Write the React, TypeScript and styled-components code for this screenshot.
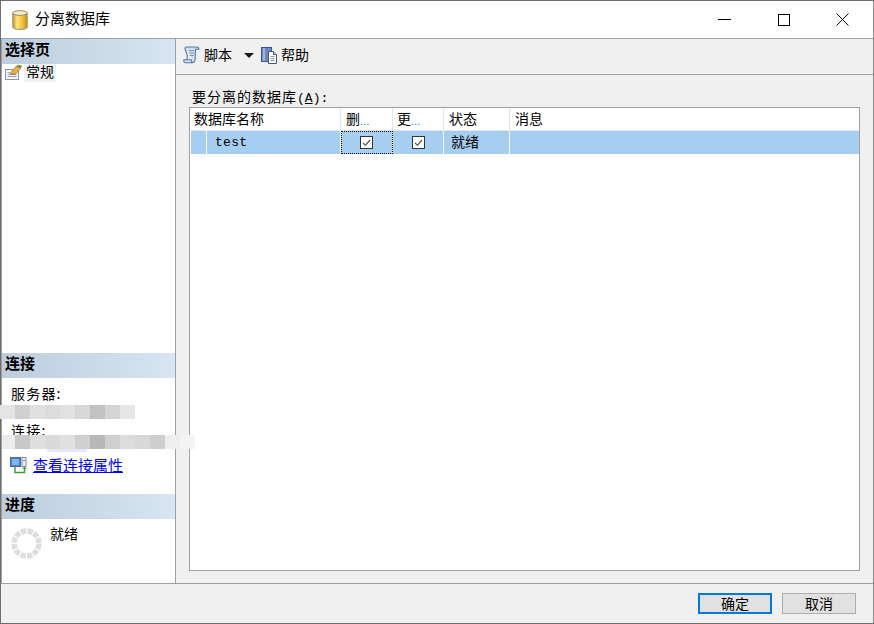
import React from 'react';
import styled, { createGlobalStyle } from 'styled-components';

const GlobalStyle = createGlobalStyle`
  html, body {
    margin: 0;
    padding: 0;
    background: #f0f0f0;
  }
  body {
    font-family: "Noto Sans CJK SC", "Liberation Sans", sans-serif;
    font-size: 14px;
    color: #000;
  }
`;

const Window = styled.div`
  box-sizing: border-box;
  width: 874px;
  height: 624px;
  display: flex;
  flex-direction: column;
  border: 1px solid #6e6e6e;
  border-right-color: #8a8a8a;
  background: #f0f0f0;
`;

const TitleBar = styled.div`
  flex: 0 0 37px;
  display: flex;
  align-items: center;
  background: #fff;
  border-bottom: 1px solid #a0a0a0;
  padding: 0 1px 0 11px;
`;

const TitleText = styled.span`
  margin-left: 7px;
  padding-bottom: 3px;
  font-size: 15px;
  line-height: 34px;
  flex: 1;
`;

const WinButton = styled.div`
  width: 59px;
  height: 37px;
  display: flex;
  align-items: center;
  justify-content: center;
`;

const Body = styled.div`
  flex: 1;
  display: flex;
  min-height: 0;
`;

const Sidebar = styled.div`
  flex: 0 0 175px;
  width: 175px;
  min-width: 0;
  box-sizing: border-box;
  display: flex;
  flex-direction: column;
  background: #fff;
  border-left: 1px solid #a0a0a0;
  border-right: 1px solid #a0a0a0;
`;

const SectionHeader = styled.div`
  flex: 0 0 25px;
  height: 25px;
  background: linear-gradient(to right, #bdcddc, #d8e5f2);
  font-weight: 700;
  font-size: 15px;
  line-height: 20px;
  padding-left: 3px;
`;

const PagesSection = styled.div`
  flex: 1;
`;

const PageItem = styled.div`
  display: flex;
  align-items: center;
  height: 18px;
  padding-left: 3px;
`;

const PageLabel = styled.span`
  margin-left: 2px;
  padding: 0 2px 3px;
  background: #f0f0f0;
  line-height: 15px;
  font-size: 14px;
`;

const ConnectSection = styled.div`
  flex: 0 0 141px;
`;

const ConnectBody = styled.div`
  padding: 6px 0 0 9px;
  height: 116px;
  box-sizing: border-box;
`;

const InfoLabel = styled.div`
  font-size: 14px;
  line-height: 18px;
  letter-spacing: 1.2px;
`;

const Mosaic = styled.div<{ $mt: number; $ml: number; $mb: number }>`
  display: flex;
  height: 14px;
  width: 195px;
  margin: ${p => p.$mt}px 0 ${p => p.$mb}px ${p => p.$ml}px;
  position: relative;
  z-index: 2;
`;

const MosaicCell = styled.div<{ $w: number; $shade: string }>`
  flex: 0 0 ${p => p.$w}px;
  background: ${p => p.$shade};
`;

const MosaicResidue = styled.div`
  width: 40px;
  height: 3px;
  margin-left: 36px;
  background: #e6e6fb;
`;

const LinkRow = styled.div`
  display: flex;
  align-items: center;
  height: 18px;
  margin: 4px 0 0 -1px;
`;

const ConnectLink = styled.a`
  margin-left: 6px;
  color: #0000ee;
  text-decoration: underline;
  font-size: 15px;
  line-height: 18px;
  cursor: pointer;
`;

const ProgressSection = styled.div`
  flex: 0 0 89px;
`;

const ProgressBody = styled.div`
  display: flex;
  align-items: flex-start;
  padding: 6px 0 0 9px;
`;

const SpinnerSlot = styled.div`
  margin-top: 3px;
  height: 31px;
`;

const ProgressText = styled.span`
  margin-left: 8px;
  font-size: 14px;
  line-height: 16px;
`;

const Main = styled.div`
  flex: 1;
  display: flex;
  flex-direction: column;
  min-width: 0;
`;

const Toolbar = styled.div`
  box-sizing: border-box;
  flex: 0 0 36px;
  display: flex;
  align-items: center;
  padding: 0 0 3px 7px;
  border-bottom: 1px solid #a0a0a0;
  background: #f0f0f0;
`;

const ToolLabel = styled.span`
  margin-left: 4px;
  padding-bottom: 3px;
  font-size: 14px;
  line-height: 16px;
`;

const Caret = styled.span`
  width: 0;
  height: 0;
  margin: 0 7px 0 12px;
  border-left: 5px solid transparent;
  border-right: 5px solid transparent;
  border-top: 5px solid #1a1a1a;
`;

const Content = styled.div`
  flex: 1;
  display: flex;
  flex-direction: column;
  padding: 13px;
  padding-bottom: 12px;
  min-height: 0;
`;

const GridLabel = styled.div`
  margin-left: 3px;
  height: 19px;
  font-size: 14px;
  line-height: 17px;
  letter-spacing: 1px;
`;

const GridAccess = styled.span`
  font-family: "Liberation Mono", monospace;
  font-size: 13px;
  letter-spacing: 0;
`;

const GridUnderline = styled.span`
  text-decoration: underline;
`;

const Grid = styled.div`
  flex: 1;
  background: #fff;
  border: 1px solid #a0a0a0;
  padding: 0 0 0 1px;
`;

const Row = styled.div<{ $selected?: boolean }>`
  display: flex;
  height: ${p => (p.$selected ? 23 : 22)}px;
  background: ${p => (p.$selected ? '#a5cef0' : '#fff')};
  border-bottom: ${p => (p.$selected ? 'none' : '1px solid #e4e4e4')};
`;

const Cell = styled.div<{ $w?: number; $center?: boolean; $pad?: number }>`
  box-sizing: border-box;
  ${p => (p.$w ? `flex: 0 0 ${p.$w}px;` : 'flex: 1;')}
  display: flex;
  align-items: center;
  justify-content: ${p => (p.$center ? 'center' : 'flex-start')};
  padding-left: ${p => p.$pad ?? 0}px;
  white-space: nowrap;
  font-size: 14px;
`;

const HeaderCell = styled(Cell)<{ $last?: boolean }>`
  padding-bottom: 2px;
  border-right: ${p => (p.$last ? 'none' : '1px solid #e4e4e4')};
`;

const DataCell = styled(Cell)<{ $focus?: boolean }>`
  border-right: 1px solid #fff;
  ${p => (p.$focus ? 'outline: 1px dotted #000; outline-offset: -1px;' : '')}
`;

const StatusText = styled.span`
  padding-bottom: 3px;
`;

const Ellipsis = styled.span`
  color: #0a6fc2;
  font-size: 10px;
  align-self: flex-end;
  line-height: 14px;
  letter-spacing: 0.5px;
`;

const MonoText = styled.span`
  font-family: "Liberation Mono", monospace;
  font-size: 13px;
  letter-spacing: 0.3px;
`;

const CheckBox = styled.span`
  box-sizing: border-box;
  width: 13px;
  height: 13px;
  display: flex;
  align-items: center;
  justify-content: center;
  background: #fff;
  border: 1px solid #333;
`;

const Footer = styled.div`
  box-sizing: border-box;
  flex: 0 0 40px;
  display: flex;
  align-items: flex-start;
  justify-content: flex-end;
  gap: 10px;
  padding: 9px 17px 0 0;
  border-top: 1px solid #a0a0a0;
`;

const DialogButton = styled.button<{ $primary?: boolean }>`
  box-sizing: border-box;
  width: 74px;
  height: 21px;
  padding: 0;
  background: #e1e1e1;
  border: ${p => (p.$primary ? '2px solid #0078d7' : '1px solid #adadad')};
  font-family: inherit;
  font-size: 14px;
  line-height: 17px;
  color: #000;
`;

const CylinderIcon = () => (
  <svg width="16" height="20" viewBox="0 0 16 20">
    <defs>
      <linearGradient id="cyl" x1="0" x2="1" y1="0" y2="0">
        <stop offset="0" stopColor="#c39a2c" />
        <stop offset="0.3" stopColor="#fde582" />
        <stop offset="0.7" stopColor="#f2bd30" />
        <stop offset="1" stopColor="#c2901c" />
      </linearGradient>
    </defs>
    <path d="M.8 3v14c0 1.5 3.2 2.5 7.2 2.5s7.2-1 7.2-2.5V3z" fill="url(#cyl)" stroke="#8a8468" strokeWidth="0.9" />
    <ellipse cx="8" cy="3" rx="7.2" ry="2.4" fill="#f5ecc4" stroke="#8a8468" strokeWidth="0.9" />
  </svg>
);

const ScrollIcon = () => (
  <svg width="17" height="18" viewBox="0 0 17 18">
    <path d="M3.5 1h10c1.4 0 2.4.9 2.4 2.2h-3.4l-.4 9.8c-.1 2.3-1 3.8-2.8 3.8H2.6C1.2 16.8.6 15.5.9 13.8h7.3c0 1.3.4 2.2 1.3 2.4" fill="#d3dfef" stroke="#56779f" strokeWidth="1.1" />
    <path d="M3.5 1C2.2 1 1.7 2.1 2.1 3.4l1.7 4.3c.5 1.7.6 3.7.3 6.1" fill="#bccde3" stroke="#56779f" strokeWidth="1.1" />
    <path d="M5.8 4.5h5M6.4 7h4.6M6.7 9.5h4.2" stroke="#7a93b4" strokeWidth="1" />
  </svg>
);

const HelpIcon = () => (
  <svg width="16" height="17" viewBox="0 0 16 17">
    <rect x="0.5" y="0.5" width="10" height="14" fill="#6f86bd" stroke="#3c5592" />
    <rect x="2" y="1" width="2" height="13" fill="#a3b3da" />
    <path d="M7.5 4.5h5l3 3v9h-8z" fill="#fff" stroke="#47557a" />
    <path d="M12.5 4.5v3h3" fill="#dfe5f2" stroke="#47557a" />
    <path d="M9.5 9.5h4M9.5 11.5h4M9.5 13.5h4" stroke="#8a96b4" />
  </svg>
);

const PageIcon = () => (
  <svg width="17" height="16" viewBox="0 0 17 16">
    <rect x="0.5" y="4.5" width="13" height="10" fill="#f4f6fa" stroke="#8b93a0" />
    <path d="M2.5 7.5h2M2.5 9.5h9M2.5 11.5h9" stroke="#8fa0bb" />
    <path d="M5 8.5L11 1.5l5 1.5-6 6.5z" fill="#eeb044" stroke="#94701f" strokeWidth="0.7" />
    <path d="M11 1.5l5 1.5 1-2.5L13 0z" fill="#7f8c2e" />
  </svg>
);

const ConnectionIcon = () => (
  <svg width="17" height="17" viewBox="0 0 17 17">
    <rect x="0.5" y="0.5" width="10" height="9" fill="#3f7fe0" stroke="#5a6a8a" />
    <rect x="2" y="2" width="7" height="6" fill="#7fb6f5" />
    <rect x="12" y="0.5" width="4" height="9" fill="#eef0f4" stroke="#7c879e" />
    <path d="M13 3.5h2" stroke="#7c879e" />
    <path d="M5 10v5.5h9.500v-4" fill="none" stroke="#3f9a2e" strokeWidth="1.4" />
    <path d="M12.3 12l2.200-2.500 2.200 2.500z" fill="#3f9a2e" />
  </svg>
);

const Spinner = () => (
  <svg width="31" height="31" viewBox="0 0 31 31">
    <circle
      cx="15.5"
      cy="15.5"
      r="12.5"
      fill="none"
      stroke="#dedede"
      strokeWidth="5.5"
      strokeDasharray="5.3 1.245"
      strokeDashoffset="-0.62"
    />
  </svg>
);

const CheckMark = () => (
  <svg width="9" height="9" viewBox="0 0 9 9">
    <path d="M1 5l2.5 2.2L8 2" fill="none" stroke="#555" strokeWidth="1.2" />
  </svg>
);

const GRID_COLS = { head: 16, name: 134, del: 52, upd: 51, state: 66 };

const mosaicTop: [number, string][] = [
  [15, '#e4e4e4'], [15, '#d0d0d0'], [15, '#e0e0e0'], [15, '#dcdcdc'], [15, '#e2e2e2'],
  [15, '#d8d8d8'], [15, '#c2c2c2'], [15, '#d4d4d4'], [15, '#e6e6e6'],
];

const mosaicBottom: [number, string][] = [
  [13, '#ececec'], [15, '#c8c8c8'], [15, '#dedede'], [15, '#dadada'], [15, '#e0e0e0'],
  [15, '#d0d0d0'], [15, '#b8b8b8'], [15, '#cfcfcf'], [15, '#dcdcdc'], [15, '#d8d8d8'],
  [15, '#cecece'], [15, '#eeeeee'], [15, '#f4f4f4'],
];

export default function App() {
  return (
    <>
      <GlobalStyle />
      <Window>
        <TitleBar>
          <CylinderIcon />
          <TitleText>分离数据库</TitleText>
          <WinButton>
            <svg width="13" height="13" viewBox="0 0 13 13"><path d="M0 6.5h13" stroke="#000" /></svg>
          </WinButton>
          <WinButton>
            <svg width="12" height="12" viewBox="0 0 12 12"><rect x="0.5" y="0.5" width="11" height="11" fill="none" stroke="#000" /></svg>
          </WinButton>
          <WinButton>
            <svg width="13" height="13" viewBox="0 0 13 13"><path d="M0.5 0.5l12 12M12.5 0.5l-12 12" stroke="#000" /></svg>
          </WinButton>
        </TitleBar>
        <Body>
          <Sidebar>
            <PagesSection>
              <SectionHeader>选择页</SectionHeader>
              <PageItem>
                <PageIcon />
                <PageLabel>常规</PageLabel>
              </PageItem>
            </PagesSection>
            <ConnectSection>
              <SectionHeader>连接</SectionHeader>
              <ConnectBody>
                <InfoLabel>服务器:</InfoLabel>
                <Mosaic $mt={3} $ml={-11} $mb={2}>
                  {mosaicTop.map(([w, s], i) => <MosaicCell key={i} $w={w} $shade={s} />)}
                </Mosaic>
                <InfoLabel>连接:</InfoLabel>
                <Mosaic $mt={-4} $ml={-9} $mb={0}>
                  {mosaicBottom.map(([w, s], i) => <MosaicCell key={i} $w={w} $shade={s} />)}
                </Mosaic>
                <MosaicResidue />
                <LinkRow>
                  <ConnectionIcon />
                  <ConnectLink>查看连接属性</ConnectLink>
                </LinkRow>
              </ConnectBody>
            </ConnectSection>
            <ProgressSection>
              <SectionHeader>进度</SectionHeader>
              <ProgressBody>
                <SpinnerSlot>
                  <Spinner />
                </SpinnerSlot>
                <ProgressText>就绪</ProgressText>
              </ProgressBody>
            </ProgressSection>
          </Sidebar>
          <Main>
            <Toolbar>
              <ScrollIcon />
              <ToolLabel>脚本</ToolLabel>
              <Caret />
              <HelpIcon />
              <ToolLabel>帮助</ToolLabel>
            </Toolbar>
            <Content>
              <GridLabel>要分离的数据库<GridAccess>(<GridUnderline>A</GridUnderline>):</GridAccess></GridLabel>
              <Grid>
                <Row>
                  <HeaderCell $w={GRID_COLS.head + GRID_COLS.name} $pad={3}>数据库名称</HeaderCell>
                  <HeaderCell $w={GRID_COLS.del} $pad={5}>删<Ellipsis>...</Ellipsis></HeaderCell>
                  <HeaderCell $w={GRID_COLS.upd} $pad={4}>更<Ellipsis>...</Ellipsis></HeaderCell>
                  <HeaderCell $w={GRID_COLS.state} $pad={5}>状态</HeaderCell>
                  <HeaderCell $pad={5} $last>消息</HeaderCell>
                </Row>
                <Row $selected>
                  <DataCell $w={GRID_COLS.head} />
                  <DataCell $w={GRID_COLS.name} $pad={8}><MonoText>test</MonoText></DataCell>
                  <DataCell $w={GRID_COLS.del} $center $focus>
                    <CheckBox><CheckMark /></CheckBox>
                  </DataCell>
                  <DataCell $w={GRID_COLS.upd} $center>
                    <CheckBox><CheckMark /></CheckBox>
                  </DataCell>
                  <DataCell $w={GRID_COLS.state} $pad={7}><StatusText>就绪</StatusText></DataCell>
                  <Cell />
                </Row>
              </Grid>
            </Content>
          </Main>
        </Body>
        <Footer>
          <DialogButton $primary>确定</DialogButton>
          <DialogButton>取消</DialogButton>
        </Footer>
      </Window>
    </>
  );
}
